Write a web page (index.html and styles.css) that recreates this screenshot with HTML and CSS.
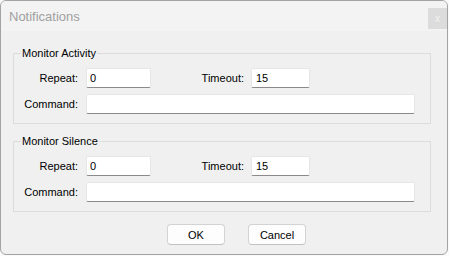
FILE: index.html
```html
<!DOCTYPE html>
<html lang="en">
<head>
<meta charset="UTF-8" />
<title>Notifications</title>
<link rel="stylesheet" href="styles.css">
</head>
<body>

<div class="dialog">
<div class="titlebar">
<span class="title">Notifications</span>
<button class="close">x</button>
</div>

<div class="content">
<fieldset class="group">
<legend>Monitor Activity</legend>
<div class="row">
<label class="lbl">Repeat:</label>
<input class="field repeat" type="text" value="0" />
<label class="lbl lbl-timeout">Timeout:</label>
<input class="field timeout" type="text" value="15" />
</div>
<div class="row">
<label class="lbl">Command:</label>
<input class="field command" type="text" value="" />
</div>
</fieldset>

<fieldset class="group">
<legend>Monitor Silence</legend>
<div class="row">
<label class="lbl">Repeat:</label>
<input class="field repeat" type="text" value="0" />
<label class="lbl lbl-timeout">Timeout:</label>
<input class="field timeout" type="text" value="15" />
</div>
<div class="row">
<label class="lbl">Command:</label>
<input class="field command" type="text" value="" />
</div>
</fieldset>

<div class="buttons">
<button class="btn">OK</button>
<button class="btn">Cancel</button>
</div>
</div>
</div>

</body>
</html>
```

FILE: styles.css
```css
* { box-sizing: border-box; }
body {
margin: 0;
background-color: #fafafa;
font-family: 'Liberation Sans', Arial, sans-serif;
font-size: 11px;
color: #000;
}
.dialog {
width: 448px;
background-color: #f0f0f0;
border: 1px solid #a3a3a3;
border-radius: 6px;
overflow: hidden;
}
.titlebar {
display: flex;
align-items: flex-start;
justify-content: space-between;
height: 30px;
background-color: #f3f3f3;
padding-left: 8px;
}
.title {
margin-top: 8px;
font-size: 13px;
line-height: 15px;
color: #a0a0a0;
}
.close {
margin-top: 7px;
width: 19px;
height: 21px;
padding: 0;
border: none;
background-color: #dcdcdc;
color: #f2f2f2;
font-family: 'Liberation Sans', Arial, sans-serif;
font-size: 10px;
line-height: 21px;
}
.content {
padding: 14px 16px 9px 12px;
}
.group {
margin: 0;
padding: 7px 0 9px 0;
border: 1px solid #dcdcdc;
}
.group + .group {
margin-top: 9px;
}
.group legend {
margin-left: 7px;
padding: 0 1px;
line-height: 16px;
font-size: 11px;
}
.row {
display: flex;
align-items: center;
}
.row + .row {
margin-top: 6px;
}
.lbl {
width: 64px;
margin-right: 8px;
text-align: right;
}
.lbl-timeout {
width: 93px;
margin-right: 7px;
}
.field {
height: 20px;
padding: 0 3px;
border: 1px solid #e6e6e6;
border-bottom-color: #8a8a8a;
border-radius: 2px;
background-color: #fff;
font-family: 'Liberation Sans', Arial, sans-serif;
font-size: 11px;
color: #000;
outline: none;
}
.repeat { width: 65px; }
.timeout { width: 59px; padding-left: 4px; }
.command { width: 329px; }
.buttons {
display: flex;
gap: 23px;
margin-top: 12px;
padding-left: 154px;
}
.btn {
width: 58px;
height: 21px;
padding: 0;
background-color: #fdfdfd;
border: 1px solid #d3d3d3;
border-bottom-color: #c2c2c2;
border-radius: 4px;
font-family: 'Liberation Sans', Arial, sans-serif;
font-size: 11px;
color: #000;
}
```
